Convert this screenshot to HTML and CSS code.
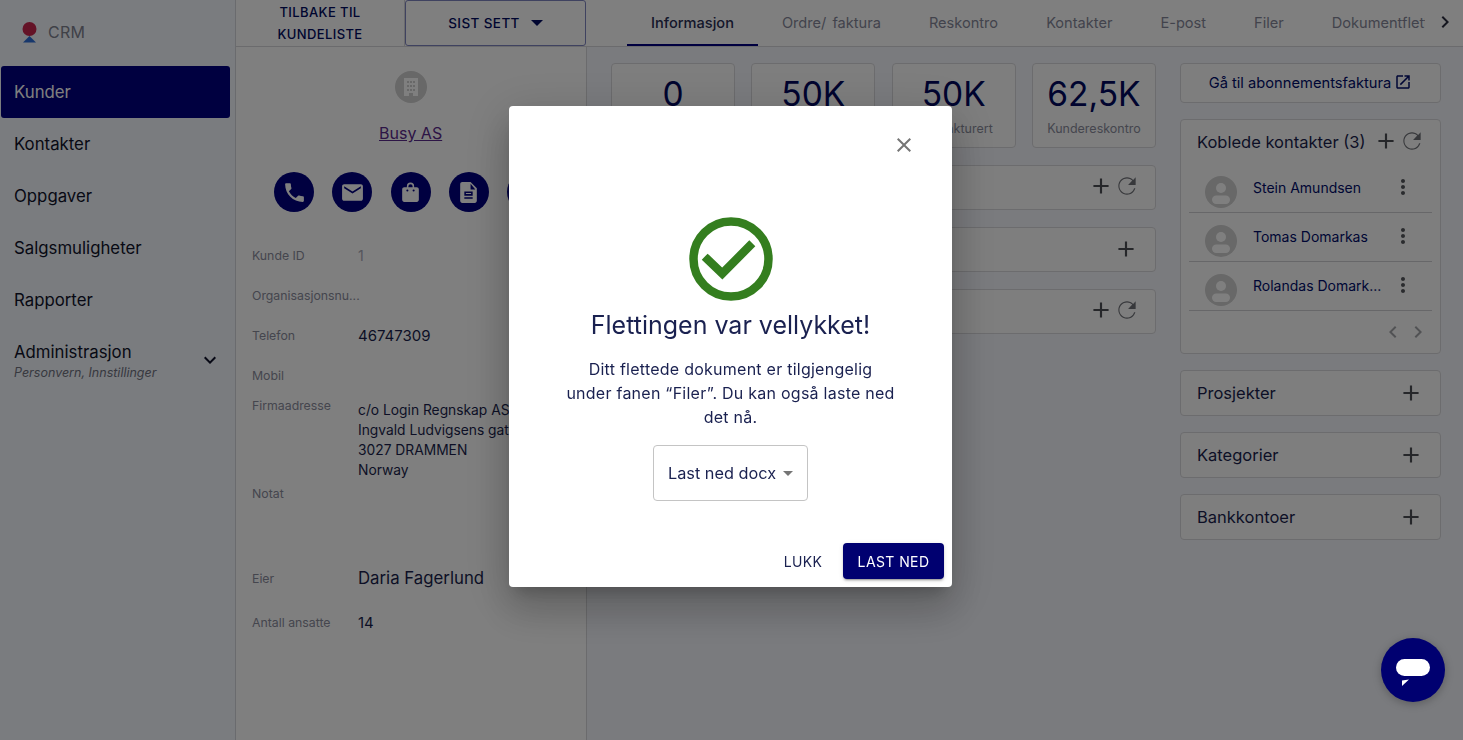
FILE: index.html
```html
<!DOCTYPE html>
<html lang="no">
<head>
<meta charset="utf-8">
<title>CRM</title>
<link rel="stylesheet" href="styles.css">
</head>
<body>
<svg class="defs" aria-hidden="true">
  <symbol id="plus" viewBox="0 0 24 24"><path d="M19 13h-6v6h-2v-6H5v-2h6V5h2v6h6v2z"/></symbol>
  <symbol id="refresh" viewBox="0 0 24 24"><path d="M17.65 6.35C16.2 4.9 14.21 4 12 4c-4.42 0-7.99 3.58-7.99 8s3.57 8 7.99 8c3.73 0 6.84-2.55 7.73-6h-1.2c-.82 2.8-3.4 5-6.53 5-3.86 0-7-3.14-7-7s3.14-7 7-7c1.9 0 3.6.77 4.85 2.02L13 11h7V4l-2.35 2.35z"/></symbol>
  <symbol id="avatar" viewBox="0 0 32 32"><circle cx="16" cy="16" r="16" fill="#d0d0d0"/><circle cx="16" cy="12" r="5" fill="#fff"/><rect x="7" y="19.500" width="18" height="8.500" rx="4.200" fill="#fff"/></symbol>
  <symbol id="dots" viewBox="0 0 24 24"><path d="M12 8c1.100 0 2-.9 2-2s-.9-2-2-2-2 .9-2 2 .9 2 2 2zm0 2c-1.100 0-2 .9-2 2s.9 2 2 2 2-.9 2-2-.9-2-2-2zm0 6c-1.100 0-2 .9-2 2s.9 2 2 2 2-.9 2-2-.9-2-2-2z"/></symbol>
</svg>

<div class="app">
  <aside class="sidebar">
    <div class="brand">
      <svg class="brand-mark" viewBox="0 0 15 21"><circle cx="7.500" cy="7" r="7" fill="#c8264f"/><path d="M7.500 14 14 20.500H1z" fill="#2e6fd8"/></svg>
      <span class="brand-name">CRM</span>
    </div>
    <nav class="nav">
      <a class="nav-item nav-active">Kunder</a>
      <a class="nav-item">Kontakter</a>
      <a class="nav-item">Oppgaver</a>
      <a class="nav-item">Salgsmuligheter</a>
      <a class="nav-item">Rapporter</a>
      <a class="nav-item nav-group">
        <span class="nav-group-text">
          <span>Administrasjon</span>
          <em class="nav-sub">Personvern, Innstillinger</em>
        </span>
        <svg class="nav-chevron" viewBox="0 0 24 24"><path d="M16.590 8.590 12 13.170 7.410 8.590 6 10l6 6 6-6z"/></svg>
      </a>
    </nav>
  </aside>

  <div class="content">
    <header class="topbar">
      <a class="back">TILBAKE TIL<br>KUNDELISTE</a>
      <button class="recent">SIST SETT <span class="caret"></span></button>
      <div class="tabs">
        <a class="tab tab-active">Informasjon</a>
        <a class="tab">Ordre/ faktura</a>
        <a class="tab">Reskontro</a>
        <a class="tab">Kontakter</a>
        <a class="tab">E-post</a>
        <a class="tab">Filer</a>
        <a class="tab">Dokumentflett</a>
      </div>
      <div class="tab-next"><svg viewBox="0 0 24 24"><path d="M10 6 8.590 7.410 13.170 12l-4.580 4.590L10 18l6-6z"/></svg></div>
    </header>

    <div class="body">
      <section class="detail">
        <div class="org-icon">
          <svg viewBox="0 0 32 32"><circle cx="16" cy="16" r="16" fill="#d0d0d0"/><path d="M9 7h14v18h-5v-3h-4v3H9z" fill="#fff"/><g fill="#d0d0d0"><rect x="12" y="10" width="2" height="2"/><rect x="15" y="10" width="2" height="2"/><rect x="18" y="10" width="2" height="2"/><rect x="12" y="14" width="2" height="2"/><rect x="15" y="14" width="2" height="2"/><rect x="18" y="14" width="2" height="2"/><rect x="12" y="18" width="2" height="2"/><rect x="15" y="18" width="2" height="2"/><rect x="18" y="18" width="2" height="2"/></g></svg>
        </div>
        <a class="org-name">Busy AS</a>
        <div class="actions">
          <span class="action"><svg viewBox="0 0 24 24"><path d="M6.620 10.790c1.440 2.830 3.760 5.140 6.590 6.590l2.200-2.200c.27-.27.67-.36 1.020-.24 1.120.37 2.330.57 3.570.57.55 0 1 .45 1 1V20c0 .55-.45 1-1 1-9.390 0-17-7.610-17-17 0-.55.45-1 1-1h3.500c.55 0 1 .45 1 1 0 1.250.2 2.450.57 3.570.11.35.03.74-.25 1.020l-2.200 2.200z"/></svg></span>
          <span class="action"><svg viewBox="0 0 24 24"><path d="M20 4H4c-1.100 0-1.990.9-1.990 2L2 18c0 1.100.9 2 2 2h16c1.100 0 2-.9 2-2V6c0-1.100-.9-2-2-2zm0 4-8 5-8-5V6l8 5 8-5v2z"/></svg></span>
          <span class="action"><svg viewBox="0 0 24 24"><path d="M18 7h-2.500V6a3.500 3.500 0 0 0-7 0v1H6c-1.100 0-2 .9-2 2v10c0 1.100.9 2 2 2h12c1.100 0 2-.9 2-2V9c0-1.100-.9-2-2-2zM10 6a2 2 0 0 1 4 0v1h-4V6zm-1 5a1 1 0 1 1 0-2 1 1 0 0 1 0 2zm6 0a1 1 0 1 1 0-2 1 1 0 0 1 0 2z"/></svg></span>
          <span class="action"><svg viewBox="0 0 24 24"><path d="M14 2H6c-1.100 0-1.990.9-1.990 2L4 20c0 1.100.89 2 1.990 2H18c1.100 0 2-.9 2-2V8l-6-6zm2 16H8v-1.500h8V18zm0-3H8v-4h8v4zm-2-6V3.500L18.500 9H14zm.5 4.500h-5v-1h5v1z" fill-rule="evenodd"/></svg></span>
          <span class="action"></span>
        </div>
        <dl class="fields">
          <div class="field"><dt>Kunde ID</dt><dd class="muted">1</dd></div>
          <div class="field"><dt>Organisasjonsnu...</dt><dd></dd></div>
          <div class="field"><dt>Telefon</dt><dd>46747309</dd></div>
          <div class="field"><dt>Mobil</dt><dd></dd></div>
          <div class="field field-address"><dt>Firmaadresse</dt><dd>c/o Login Regnskap AS<br>Ingvald Ludvigsens gate<br>3027 DRAMMEN<br>Norway</dd></div>
          <div class="field field-note"><dt>Notat</dt><dd></dd></div>
          <div class="field"><dt>Eier</dt><dd class="large">Daria Fagerlund</dd></div>
          <div class="field field-last"><dt>Antall ansatte</dt><dd>14</dd></div>
        </dl>
      </section>

      <main class="main">
        <div class="center">
          <div class="stats">
            <div class="stat"><b>0</b><span>Ordre</span></div>
            <div class="stat"><b>50K</b><span>Fakturert</span></div>
            <div class="stat"><b>50K</b><span>Ikke fakturert</span></div>
            <div class="stat"><b>62,5K</b><span>Kundereskontro</span></div>
          </div>
          <div class="bar"><svg class="ico"><use href="#plus"/></svg><svg class="ico ico-refresh"><use href="#refresh"/></svg></div>
          <div class="bar"><svg class="ico ico-solo"><use href="#plus"/></svg></div>
          <div class="bar"><svg class="ico"><use href="#plus"/></svg><svg class="ico ico-refresh"><use href="#refresh"/></svg></div>
        </div>

        <div class="side">
          <a class="sub-link">Gå til abonnementsfaktura
            <svg viewBox="0 0 24 24"><path d="M19 19H5V5h7V3H5c-1.110 0-2 .9-2 2v14c0 1.100.89 2 2 2h14c1.100 0 2-.9 2-2v-7h-2v7zM14 3v2h3.590l-9.830 9.830 1.410 1.410L19 6.410V10h2V3h-7z"/></svg>
          </a>
          <div class="contacts">
            <div class="contacts-head">
              <h3>Koblede kontakter (3)</h3>
              <svg class="ico"><use href="#plus"/></svg>
              <svg class="ico ico-refresh"><use href="#refresh"/></svg>
            </div>
            <div class="contact"><svg class="avatar"><use href="#avatar"/></svg><a>Stein Amundsen</a><svg class="dots"><use href="#dots"/></svg></div>
            <div class="contact"><svg class="avatar"><use href="#avatar"/></svg><a>Tomas Domarkas</a><svg class="dots"><use href="#dots"/></svg></div>
            <div class="contact"><svg class="avatar"><use href="#avatar"/></svg><a>Rolandas Domark...</a><svg class="dots"><use href="#dots"/></svg></div>
            <div class="pager">
              <svg viewBox="0 0 24 24"><path d="M15.410 7.410 14 6l-6 6 6 6 1.410-1.410L10.830 12z"/></svg>
              <svg viewBox="0 0 24 24"><path d="M10 6 8.590 7.410 13.170 12l-4.580 4.590L10 18l6-6z"/></svg>
            </div>
          </div>
          <div class="side-row"><h3>Prosjekter</h3><svg class="ico"><use href="#plus"/></svg></div>
          <div class="side-row"><h3>Kategorier</h3><svg class="ico"><use href="#plus"/></svg></div>
          <div class="side-row"><h3>Bankkontoer</h3><svg class="ico"><use href="#plus"/></svg></div>
        </div>
      </main>
    </div>
  </div>
</div>

<div class="overlay">
  <div class="modal" role="dialog">
    <div class="modal-close"><svg viewBox="0 0 24 24"><path d="M19 6.410 17.590 5 12 10.590 6.410 5 5 6.410 10.590 12 5 17.590 6.410 19 12 13.410 17.590 19 19 17.590 13.410 12z"/></svg></div>
    <svg class="success" viewBox="0 0 84 84"><circle cx="42" cy="42" r="37.500" fill="none" stroke="#347e1f" stroke-width="8.500"/><path d="M15.700 39.700 33.300 56.500 63.300 26.300" fill="none" stroke="#347e1f" stroke-width="8.500"/></svg>
    <h2>Flettingen var vellykket!</h2>
    <p>Ditt flettede dokument er tilgjengelig under fanen “Filer”. Du kan også laste ned det nå.</p>
    <div class="select">Last ned docx <span class="select-caret"></span></div>
    <div class="modal-actions">
      <button class="btn-text">LUKK</button>
      <button class="btn-primary">LAST NED</button>
    </div>
  </div>
</div>

<button class="chat" aria-label="Chat">
  <svg viewBox="0 0 34 28"><rect x="0" y="0" width="34" height="17" rx="8.500" fill="#fff"/><path d="M6 21.500 13 20.500 6 27z" fill="#fff"/></svg>
</button>
</body>
</html>
```
FILE: styles.css
```css
* { box-sizing: border-box; }
html, body { height: 100%; }
body {
  margin: 0;
  overflow: hidden;
  font-family: Inter, "Noto Sans", "Liberation Sans", sans-serif;
  color: #1a1f4d;
  background: #f5f7fc;
}
a { color: inherit; text-decoration: none; }
h2, h3, p, dl, dd { margin: 0; }
button { font-family: inherit; }
.defs { display: none; }

.app { display: flex; height: 740px; }

.sidebar {
  flex: 0 0 236px;
  background: #f4f8ff;
  border-right: 1px solid #d5d7dc;
  padding-left: 1px;
}
.brand {
  height: 66px;
  display: flex;
  align-items: center;
  gap: 11px;
  padding-left: 21px;
  padding-bottom: 2px;
}
.brand-mark { width: 15px; height: 21px; }
.brand-name { font-size: 16px; color: #80828f; letter-spacing: .3px; }
.nav { width: 229px; }
.nav-item {
  display: flex;
  align-items: center;
  height: 52px;
  padding-left: 13px;
  font-size: 16.800px;
  color: #10132a;
  border-radius: 3px;
}
.nav-active { background: #000080; color: #fff; }
.nav-group { height: 64px; justify-content: space-between; padding-right: 8px; }
.nav-group-text { display: flex; flex-direction: column; gap: 3px; padding-top: 6px; }
.nav-sub { font-size: 12.500px; color: #70727f; }
.nav-chevron { width: 24px; height: 24px; margin-top: 4px; fill: #10132a; }

.content { flex: 1; min-width: 0; display: flex; flex-direction: column; }
.topbar {
  flex: 0 0 47px;
  display: flex;
  align-items: stretch;
  background: #fff;
  border-bottom: 1px solid #d7d7da;
}
.back {
  flex: 0 0 169px;
  text-align: center;
  font-size: 13px;
  font-weight: 500;
  line-height: 22px;
  letter-spacing: .4px;
  padding-top: 1px;
  color: #000a60;
  border-right: 1px solid #d7d7da;
}
.recent {
  flex: 0 0 181px;
  height: 46px;
  background: #fff;
  border: 1px solid #7f84c0;
  border-radius: 3px;
  color: #000a60;
  font-size: 13.500px;
  font-weight: 500;
  letter-spacing: .4px;
  margin-right: 41px;
  display: flex;
  align-items: center;
  justify-content: center;
  gap: 11px;
}
.caret {
  width: 0;
  height: 0;
  border-left: 6px solid transparent;
  border-right: 6px solid transparent;
  border-top: 6px solid #000a60;
}
.tabs { flex: 1; min-width: 0; display: flex; overflow: hidden; }
.tab {
  flex: none;
  padding: 0 24px;
  line-height: 46px;
  font-size: 14.600px;
  word-spacing: 2px;
  color: #858799;
}
.tab-active { color: #2a2e55; font-weight: 500; border-bottom: 2px solid #000080; height: 46px; }
.tab-next { flex: 0 0 38px; display: flex; align-items: center; justify-content: center; padding-bottom: 2px; padding-left: 2px; }
.tab-next svg { width: 24px; height: 24px; fill: #2a2d3f; }

.body { flex: 1; display: flex; min-height: 0; }

.detail {
  flex: 0 0 351px;
  background: #fff;
  border-right: 1px solid #d7d7da;
  overflow: hidden;
  display: flex;
  flex-direction: column;
  align-items: stretch;
}
.org-icon { align-self: flex-start; margin: 24px 0 0 159px; height: 32px; }
.org-icon svg { width: 32px; height: 32px; display: block; }
.org-name {
  align-self: flex-start;
  margin: 18px 0 0 143px;
  font-size: 16px;
  line-height: 24px;
  color: #5b2a8c;
  text-decoration: underline;
}
.actions { display: flex; gap: 18.300px; margin: 27px 0 0 38px; width: 400px; }
.action {
  flex: none;
  width: 40px;
  height: 40px;
  border-radius: 50%;
  background: #000080;
  display: flex;
  align-items: center;
  justify-content: center;
}
.action svg { width: 25px; height: 25px; fill: #fff; }
.fields { margin-top: 23px; padding-left: 16px; width: 400px; }
.field { display: flex; align-items: center; height: 40px; }
.field dt { flex: 0 0 106px; font-size: 12.300px; color: #8a8c9c; white-space: nowrap; }
.field dd { font-size: 15px; color: #1a1f4d; white-space: nowrap; }
.field dd.muted { color: #a8aab8; font-size: 14px; }
.field dd.large { font-size: 16.800px; }
.field-address { height: 89px; align-items: flex-start; }
.field-address dt { padding-top: 3px; }
.field-address dd { line-height: 20px; padding-top: 5px; font-size: 13.800px; }
.field-note { height: 74px; align-items: flex-start; padding-top: 2px; }
.field-last { margin-top: 4px; }

.main { flex: 1; min-width: 0; display: flex; gap: 24px; padding: 16px 0 0 24px; background: #f5f7fc; }
.center { flex: 0 0 545px; display: flex; flex-direction: column; gap: 17px; }
.stats { display: flex; justify-content: space-between; }
.stat {
  flex: 0 0 124px;
  height: 85px;
  background: #fdfdfd;
  border: 1px solid #d8d8dc;
  border-radius: 4px;
  display: flex;
  flex-direction: column;
  align-items: center;
  padding-top: 9px;
}
.stat b { font-size: 33.500px; line-height: 42px; font-weight: 400; color: #00085e; }
.stat span { font-size: 12.500px; line-height: 16px; margin-top: 6px; color: #8a8c9c; white-space: nowrap; }
.bar {
  height: 45px;
  background: #fdfdfd;
  border: 1px solid #d8d8dc;
  border-radius: 4px;
  display: flex;
  align-items: center;
  justify-content: flex-end;
  padding: 0 15px 4px 0;
}
.ico { width: 26px; height: 26px; fill: #4d4f55; flex: none; }
.ico-refresh { fill: #6f7177; }
.ico-solo { margin-right: 1px; margin-top: 2px; }

.side { flex: 0 0 261px; display: flex; flex-direction: column; }
.sub-link {
  height: 40px;
  background: #fdfdfd;
  border: 1px solid #d8d8dc;
  border-radius: 4px;
  display: flex;
  align-items: center;
  justify-content: center;
  gap: 3px;
  font-size: 14.700px;
  color: #000c6a;
}
.sub-link svg { width: 18px; height: 18px; fill: #000c6a; margin-bottom: 2px; }
.contacts {
  margin-top: 16px;
  height: 235px;
  background: #fdfdfd;
  border: 1px solid #d8d8dc;
  border-radius: 4px;
  padding: 0 8px;
}
.contacts-head { display: flex; align-items: center; height: 42px; padding: 0 7px 0 8px; }
.contacts-head h3 { flex: 1; padding-top: 2px; font-size: 16.500px; font-weight: 400; color: #1a1f4d; white-space: nowrap; }
.contact {
  height: 49px;
  display: flex;
  align-items: center;
  border-bottom: 1px solid #cfcfd3;
  padding: 0 8px 0 16px;
  font-size: 14px;
  color: #000c6a;
}
.contact:nth-of-type(2) { margin-top: 2px; }
.avatar { width: 32px; height: 32px; margin-top: 8px; flex: none; }
.contact a { flex: 1; padding: 0 0 2px 16px; white-space: nowrap; }
.dots { width: 24px; height: 24px; fill: #55575c; flex: none; margin: 0 9px 2px 0; }
.pager { display: flex; justify-content: flex-end; gap: 1px; padding: 9px 2px 0 0; }
.pager svg { width: 24px; height: 24px; fill: #a3a5a9; }
.side-row {
  margin-top: 16px;
  height: 46px;
  background: #fdfdfd;
  border: 1px solid #d8d8dc;
  border-radius: 4px;
  display: flex;
  align-items: center;
  justify-content: space-between;
  padding: 0 16px;
}
.side-row h3 { font-size: 16.500px; font-weight: 400; color: #1a1f4d; }

.overlay {
  position: fixed;
  inset: 0;
  background: rgba(0, 0, 0, .5);
  display: flex;
  justify-content: center;
  align-items: flex-start;
  padding: 106px 2px 0 0;
}
.modal {
  position: relative;
  width: 443px;
  height: 481px;
  background: #fff;
  border-radius: 4px;
  box-shadow: 0 11px 15px -7px rgba(0,0,0,.2), 0 24px 38px 3px rgba(0,0,0,.14), 0 9px 46px 8px rgba(0,0,0,.12);
  display: flex;
  flex-direction: column;
  align-items: center;
  padding-top: 111px;
}
.modal-close { position: absolute; top: 27px; right: 36px; width: 24px; height: 24px; }
.modal-close svg { width: 24px; height: 24px; fill: #757575; display: block; }
.success { width: 84px; height: 84px; flex: none; }
.modal h2 { margin-top: 9px; font-size: 25px; line-height: 31px; font-weight: 400; color: #1a2150; white-space: nowrap; }
.modal p {
  margin-top: 16px;
  width: 332px;
  text-align: center;
  font-size: 16px;
  letter-spacing: .25px;
  line-height: 24px;
  color: #1a2150;
}
.select {
  margin-top: 16px;
  width: 155px;
  height: 56px;
  border: 1px solid #c4c4c4;
  border-radius: 4px;
  display: flex;
  align-items: center;
  padding-left: 14px;
  font-size: 16.300px;
  color: #1a2150;
  white-space: nowrap;
  gap: 7px;
}
.select-caret {
  width: 0;
  height: 0;
  border-left: 5px solid transparent;
  border-right: 5px solid transparent;
  border-top: 5px solid #757575;
}
.modal-actions {
  margin-top: auto;
  align-self: stretch;
  display: flex;
  justify-content: flex-end;
  align-items: center;
  gap: 8px;
  padding: 0 8px 8px 0;
}
.btn-text {
  background: none;
  border: 0;
  height: 36px;
  width: 64px;
  padding: 0;
  font-size: 14px;
  letter-spacing: .4px;
  color: #1a2150;
}
.btn-primary {
  width: 101px;
  height: 36px;
  background: #000070;
  color: #fff;
  border: 0;
  border-radius: 4px;
  font-size: 14px;
  letter-spacing: .4px;
  box-shadow: 0 3px 1px -2px rgba(0,0,0,.2), 0 2px 2px rgba(0,0,0,.14), 0 1px 5px rgba(0,0,0,.12);
}

.chat {
  position: fixed;
  right: 18px;
  bottom: 38px;
  width: 64px;
  height: 64px;
  border-radius: 50%;
  border: 0;
  padding: 0;
  background: #000070;
  display: flex;
  align-items: center;
  justify-content: center;
  box-shadow: 0 2px 8px rgba(0,0,0,.25);
}
.chat svg { width: 34px; height: 28px; margin-top: 6px; }
```
